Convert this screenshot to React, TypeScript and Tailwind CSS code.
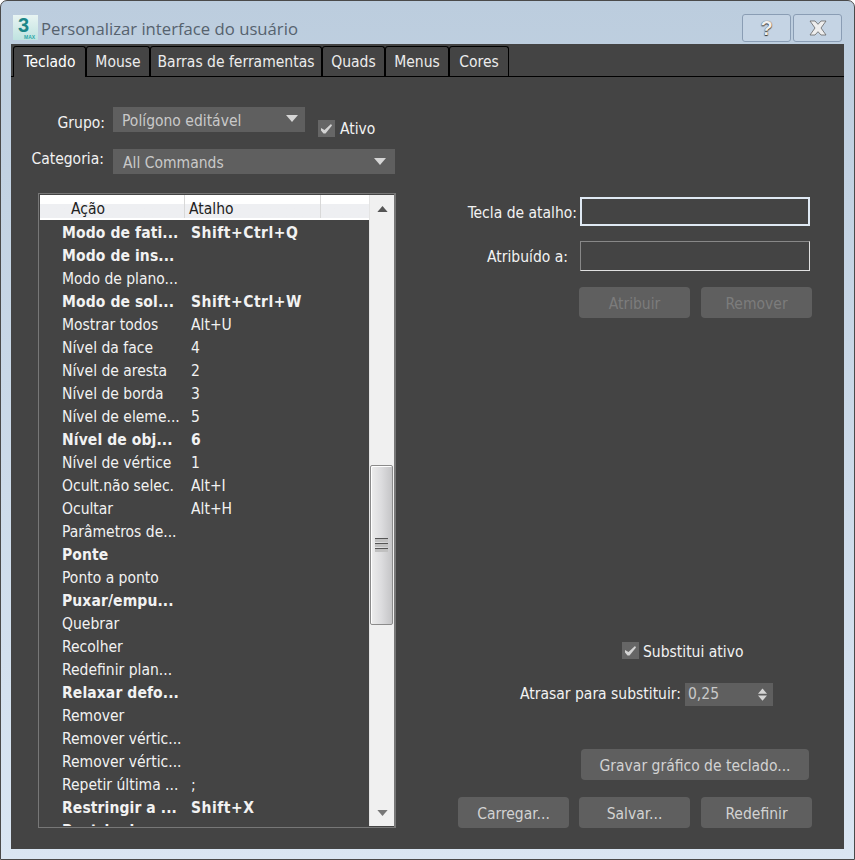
const tabs = ["Teclado", "Mouse", "Barras de ferramentas", "Quads", "Menus", "Cores"];
const tabWidths = ["w-[73px]", "w-[64px]", "w-[172px]", "w-[63px]", "w-[64px]", "w-[60px]"];

const rows: [string, string, boolean][] = [
  ["Modo de fati...", "Shift+Ctrl+Q", true],
  ["Modo de ins...", "", true],
  ["Modo de plano...", "", false],
  ["Modo de sol...", "Shift+Ctrl+W", true],
  ["Mostrar todos", "Alt+U", false],
  ["Nível da face", "4", false],
  ["Nível de aresta", "2", false],
  ["Nível de borda", "3", false],
  ["Nível de eleme...", "5", false],
  ["Nível de obj...", "6", true],
  ["Nível de vértice", "1", false],
  ["Ocult.não selec.", "Alt+I", false],
  ["Ocultar", "Alt+H", false],
  ["Parâmetros de...", "", false],
  ["Ponte", "", true],
  ["Ponto a ponto", "", false],
  ["Puxar/empu...", "", true],
  ["Quebrar", "", false],
  ["Recolher", "", false],
  ["Redefinir plan...", "", false],
  ["Relaxar defo...", "", true],
  ["Remover", "", false],
  ["Remover vértic...", "", false],
  ["Remover vértic...", "", false],
  ["Repetir última ...", ";", false],
  ["Restringir a ...", "Shift+X", true],
  ["Restringir a ...", "", true],
];

function Triangle({ up, className }: { up?: boolean; className?: string }) {
  return (
    <svg width="12" height="7" viewBox="0 0 12 7" className={className}>
      <path d={up ? "M6 0 L12 7 L0 7 Z" : "M0 0 L12 0 L6 7 Z"} fill="currentColor" />
    </svg>
  );
}

function Check() {
  return (
    <span className="flex h-[17px] w-[17px] shrink-0 items-center justify-center bg-[#666666]">
      <svg width="13" height="11" viewBox="0 0 13 11">
        <path d="M1 5 L4.5 7 L11 1 L12 2.5 L5.5 10.5 L3.5 10.5 L1 7.5 Z" fill="#d4d4d4" />
      </svg>
    </span>
  );
}

function Btn({ label, disabled, w = "w-[111px]" }: { label: string; disabled?: boolean; w?: string }) {
  return (
    <div
      className={`flex h-[31px] ${w} items-center justify-center rounded-[4px] bg-[#5f5f5f] pt-[4px] ${
        disabled ? "text-[#7c7c7c]" : "text-[#d2d2d2]"
      }`}
    >
      {label}
    </div>
  );
}

export default function App() {
  return (
    <div className="flex h-[860px] w-[855px] flex-col overflow-hidden rounded-t-[7px] border border-[#4a4a4a] bg-gradient-to-b from-[#bccdde] to-[#dae6f3] font-['DejaVu_Sans',sans-serif] text-[15.5px] text-[#f2f2f2] [font-stretch:condensed]">
      {/* title bar */}
      <div className="flex h-[43px] shrink-0 items-start">
        <div className="ml-[12px] mt-[14px] h-[25px] w-[25px] bg-gradient-to-b from-[#e8f4f2] to-[#bfe3e0]">
          <svg width="25" height="25" viewBox="0 0 25 25">
            <text x="5" y="17" fontSize="20" fontWeight="700" fontFamily="'Liberation Sans', sans-serif" fill="#1b8688">
              3
            </text>
            <text x="11" y="24" fontSize="5" fontWeight="700" fontFamily="'Liberation Sans', sans-serif" fill="#2aa7a7">
              MAX
            </text>
          </svg>
        </div>
        <span className="ml-[3px] mt-[15px] font-['Open_Sans',sans-serif] text-[16.7px] leading-[26px] text-[#56626e] [font-stretch:normal]">
          Personalizar interface do usuário
        </span>
        <div className="ml-auto mr-[12px] mt-[13px] flex gap-[2px]">
          <div className="flex h-[28px] w-[49px] items-center justify-center rounded-[3px] border border-[#8a9db4] bg-[#c5d4e4]">
            <span className="font-['Liberation_Sans',sans-serif] text-[20px] font-bold leading-none text-[#f0f0f0] [text-shadow:0_0_1px_#333,0_1px_1px_#333]">
              ?
            </span>
          </div>
          <div className="flex h-[28px] w-[49px] items-center justify-center rounded-[3px] border border-[#8a9db4] bg-[#c5d4e4]">
            <svg width="18" height="16" viewBox="0 0 18 16">
              <path
                d="M1 1 H6 L9 4.3 L12 1 H17 L12 8 L17 15 H12 L9 11.7 L6 15 H1 L6 8 Z"
                fill="#eeeeee"
                stroke="#666"
                strokeWidth="0.8"
              />
            </svg>
          </div>
        </div>
      </div>

      {/* main panel */}
      <div className="mx-[10px] flex h-[805px] shrink-0 flex-col bg-[#444444]">
        <div className="flex h-[33px] shrink-0 border-b border-black pl-[2px] pt-[2px]">
          {tabs.map((t, i) => (
            <div
              key={t}
              className={`flex ${tabWidths[i]} items-center justify-center rounded-t-[3px] border-x border-t border-black pt-[2px] ${
                i === 0 ? "h-[31px] bg-[#444444] text-white" : "h-[30px] bg-[#444444] text-[#ececec]"
              }`}
            >
              {t}
            </div>
          ))}
        </div>

        <div className="flex flex-1">
          {/* left */}
          <div className="w-[385px] shrink-0">
            <div className="mt-[30px] flex h-[25px]">
              <span className="w-[94px] text-right leading-[32px]">Grupo:</span>
              <div className="ml-[8px] flex w-[192px] items-center justify-between bg-[#5f5f5f] pl-[9px] pr-[7px] text-[#c9c9c9]">
                <span className="pt-[4px]">Polígono editável</span>
                <Triangle className="mb-[3px] text-[#d6d6d6]" />
              </div>
              <div className="ml-[13px] mt-[13px] flex h-[17px] items-center gap-[5px]">
                <Check />
                <span className="pt-[2px]">Ativo</span>
              </div>
            </div>
            <div className="mt-[17px] flex h-[25px]">
              <span className="w-[93px] text-right leading-[20px]">Categoria:</span>
              <div className="ml-[9px] flex w-[282px] items-center justify-between bg-[#5f5f5f] pl-[10px] pr-[9px] text-[#c9c9c9]">
                <span className="pt-[5px]">All Commands</span>
                <Triangle className="text-[#d6d6d6]" />
              </div>
            </div>

            {/* command list */}
            <div className="ml-[27px] mt-[19px] flex h-[635px] w-[358px] border border-r-2 border-[#777777] pb-px pl-px pt-px">
              <div className="flex min-w-0 flex-1 flex-col overflow-hidden">
                <div className="flex h-[25px] shrink-0 border-b-2 border-white bg-gradient-to-b from-white from-40% to-[#eeeff2] to-40% text-[#222222]">
                  <div className="w-[145px] border-r border-[#d8d8d8] pl-[31px] leading-[29px]">Ação</div>
                  <div className="w-[136px] border-r border-[#d8d8d8] pl-[4px] leading-[29px]">Atalho</div>
                </div>
                <div className="flex-1 overflow-hidden">
                  {rows.map((r, i) => (
                    <div key={i} className={`flex h-[23px] items-center pt-[4px] ${r[2] ? "font-bold" : ""}`}>
                      <span className={`ml-[22px] w-[129px] whitespace-nowrap ${r[2] ? "tracking-[0.1px]" : ""}`}>{r[0]}</span>
                      <span className={`whitespace-nowrap ${r[2] ? "tracking-[0.5px]" : ""}`}>{r[1]}</span>
                    </div>
                  ))}
                </div>
              </div>
              {/* scrollbar */}
              <div className="flex w-[25px] shrink-0 flex-col items-center border-l border-[#e4e4e4] bg-[#f0f0f0]">
                <Triangle up className="mt-[11px] h-[6px] w-[11px] text-[#555555]" />
                <div className="mt-[253px] flex h-[160px] w-[23px] items-center justify-center self-start rounded-[2px] border border-[#8b8b8b] bg-gradient-to-r from-[#ededed] via-[#dcdcde] to-[#c4c4c6] shadow-[inset_1px_1px_0_#ffffff]">
                  <div className="flex w-[13px] flex-col gap-px">
                    <div className="h-[4px] border-t border-[#555555] bg-[#c0c0c0]" />
                    <div className="h-[4px] border-t border-[#555555] bg-[#c0c0c0]" />
                    <div className="h-[4px] border-t border-[#555555] bg-[#c0c0c0]" />
                  </div>
                </div>
                <Triangle className="mb-[10px] mt-auto h-[6px] w-[11px] text-[#777777]" />
              </div>
            </div>
          </div>

          {/* right */}
          <div className="flex-1">
            <div className="mt-[120px] flex h-[29px] items-center">
              <span className="w-[181px] pt-[5px] text-right">Tecla de atalho:</span>
              <div className="ml-[3px] h-[29px] w-[230px] border-2 border-[#dfe9f3]" />
            </div>
            <div className="mt-[15px] flex h-[30px] items-center">
              <span className="w-[172px] pt-[4px] text-right">Atribuído a:</span>
              <div className="ml-[12px] h-[30px] w-[230px] border border-[#e0e0e0] border-l-[#888888] border-t-[#888888]" />
            </div>
            <div className="ml-[183px] mt-[16px] flex gap-[11px]">
              <Btn label="Atribuir" disabled />
              <Btn label="Remover" disabled />
            </div>
            <div className="ml-[226px] mt-[324px] flex h-[17px] items-center gap-[4px]">
              <Check />
              <span className="pt-[4px]">Substitui ativo</span>
            </div>
            <div className="mt-[24px] flex h-[23px] items-center">
              <span className="w-[285px] text-right">Atrasar para substituir:</span>
              <div className="ml-[4px] flex h-[23px] w-[88px] items-center justify-between bg-[#5f5f5f] pl-[3px] pr-[6px] text-[#c9c9c9]">
                <span>0,25</span>
                <div className="flex flex-col gap-px">
                  <Triangle up className="h-[6px] w-[9px] text-[#d6d6d6]" />
                  <Triangle className="h-[6px] w-[9px] text-[#d6d6d6]" />
                </div>
              </div>
            </div>
            <div className="ml-[185px] mt-[43px]">
              <Btn label="Gravar gráfico de teclado..." w="w-[228px]" />
            </div>
            <div className="ml-[62px] mt-[17px] flex gap-[10px]">
              <Btn label="Carregar..." />
              <Btn label="Salvar..." />
              <div className="ml-px">
                <Btn label="Redefinir" />
              </div>
            </div>
          </div>
        </div>
      </div>
    </div>
  );
}
